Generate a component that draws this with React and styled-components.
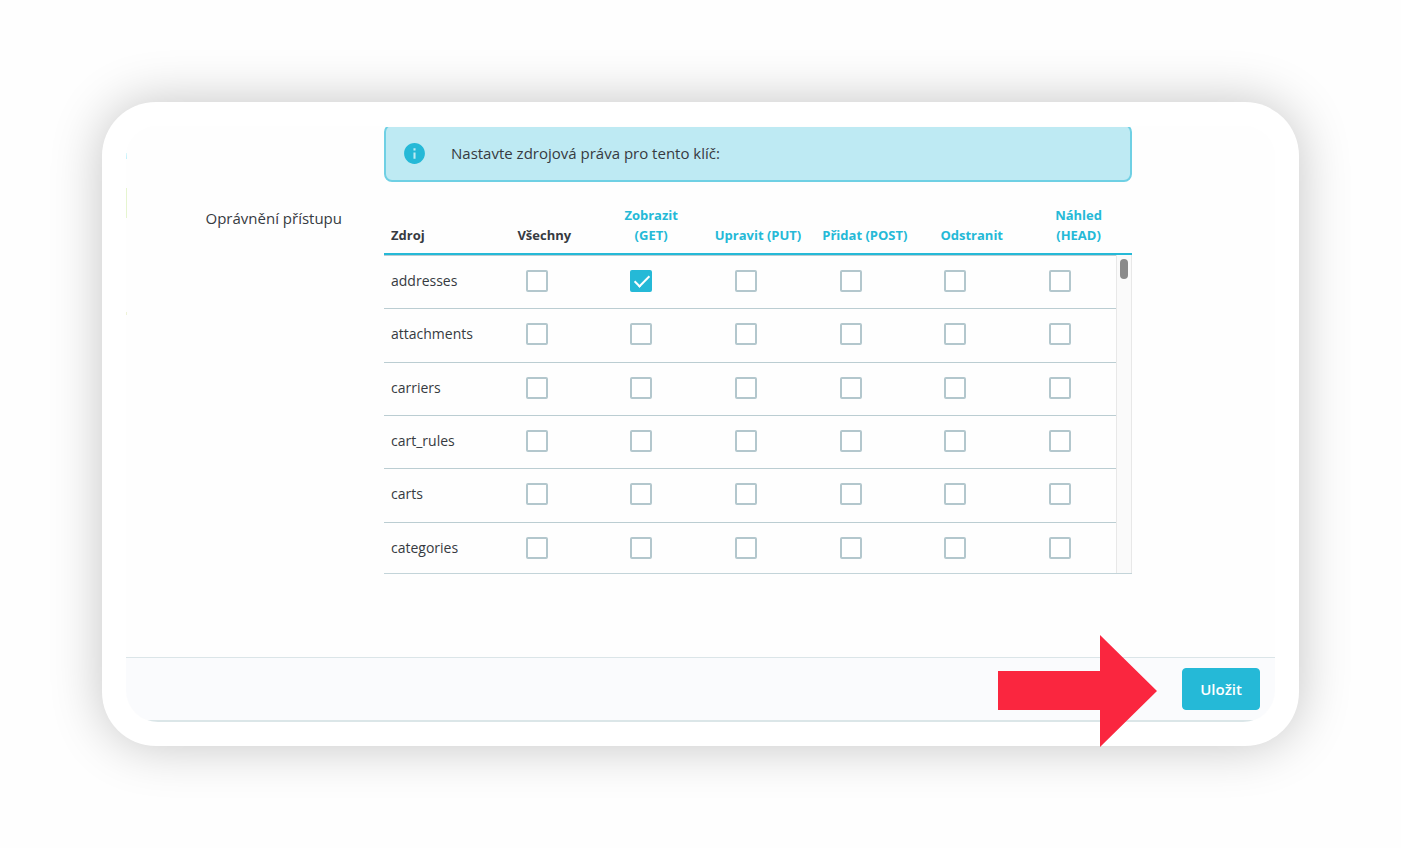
import React, { useState } from 'react'
import styled, { createGlobalStyle } from 'styled-components'
import { MdInfo } from 'react-icons/md'

const GlobalStyle = createGlobalStyle`
  * {
    box-sizing: border-box;
  }

  body {
    margin: 0;
    background: #fefefe;
    color: #363a41;
    font-family: 'Open Sans', 'Noto Sans', sans-serif;
  }
`

const Page = styled.main`
  display: flex;
  flex-direction: column;
  min-height: 100vh;
  padding: 102px;
`

const Card = styled.div`
  position: relative;
  display: flex;
  flex: 1;
  flex-direction: column;
  padding: 24px;
  border-radius: 54px;
  background: #fff;
  box-shadow: 0 0 52px rgba(0, 0, 0, 0.23);
`

const Screen = styled.form`
  display: flex;
  flex: 1;
  flex-direction: column;
  padding-top: 1px;
  border-radius: 32px;
  overflow: hidden;
  background:
    linear-gradient(#c4f2fb, #c4f2fb) 0 27px / 1px 6px no-repeat,
    linear-gradient(#e6f5d0, #e6f5d0) 0 62px / 1px 30px no-repeat,
    linear-gradient(#eef3d8, #eef3d8) 0 186px / 1px 3px no-repeat,
    #fefefe;
`

const FormRow = styled.div`
  display: grid;
  flex: 1;
  grid-template-columns: 216px minmax(0, 1fr);
  align-items: start;
  column-gap: 42px;
  padding-right: 143px;
  overflow: hidden;
`

const RowLabel = styled.div`
  padding-top: 80px;
  font-size: 15px;
  line-height: 22px;
  text-align: right;
`

const Alert = styled.div`
  display: flex;
  align-items: center;
  gap: 24px;
  height: 58px;
  margin: -3px 0 13px;
  padding: 0 16px;
  border: 2px solid #6fd0e4;
  border-radius: 8px;
  background: #beeaf3;
  font-size: 15px;

  svg {
    color: #25b9d7;
  }
`

const TableFrame = styled.div`
  position: relative;
  height: 379px;
  border-bottom: 1px solid #c3d4d9;
  overflow: hidden;
`

const Table = styled.table`
  display: block;
  font-size: 13px;
  line-height: 20px;
`

const Head = styled.thead`
  display: block;
  height: 60px;
  border-bottom: 2px solid #25b9d7;
`

const Body = styled.tbody`
  display: grid;
  grid-auto-rows: 1fr;
  height: 320px;
  margin-right: 16px;
`

const HeadRow = styled.tr`
  display: grid;
  grid-template-columns: repeat(7, 1fr);
  align-items: end;
  height: 100%;
  padding-bottom: 8px;
`

const BodyRow = styled.tr`
  display: grid;
  grid-template-columns: repeat(7, 1fr);
  align-items: center;
  border-top: 1px solid #bbcdd2;
`

const HeadCell = styled.th`
  padding: ${({ $left }) => ($left ? '0 7px' : '0 9px')};
  color: ${({ $accent }) => ($accent ? '#25b9d7' : '#363a41')};
  font-weight: 700;
  text-align: ${({ $left }) => ($left ? 'left' : 'center')};
`

const NameCell = styled.th`
  padding: 0 7px 2px;
  font-size: 14px;
  font-weight: 400;
  text-align: left;
`

const CheckCell = styled.td`
  display: flex;
  justify-content: center;
  padding: 0 8px 2px 0;
`

const Checkbox = styled.input`
  display: grid;
  width: 22px;
  height: 22px;
  margin: 0;
  border: 2px solid #b3c7cd;
  border-radius: 2px;
  background: #fff;
  appearance: none;
  cursor: pointer;

  &:checked {
    border-color: #25b9d7;
    background: #25b9d7;
  }

  &:checked::after {
    content: '';
    width: 6px;
    height: 13px;
    margin-left: 6px;
    border: solid #fff;
    border-width: 0 2px 2px 0;
    transform: rotate(45deg);
  }
`

const ScrollTrack = styled.div`
  position: absolute;
  top: 60px;
  right: 0;
  bottom: 0;
  width: 16px;
  padding: 4px 3px;
  border: solid #e8e8e8;
  border-width: 0 1px;
  background: #fafafa;
`

const ScrollThumb = styled.div`
  height: 20px;
  border-radius: 4px;
  background: #8a8a8a;
`

const Footer = styled.footer`
  display: flex;
  align-items: center;
  justify-content: flex-end;
  height: 65px;
  padding-right: 15px;
  border-top: 1px solid #dbe5e8;
  border-bottom: 2px solid #dbe6e8;
  background: #fafbfd;
`

const SaveButton = styled.button`
  height: 42px;
  padding: 0 17px;
  border: 1px solid #25b9d7;
  border-radius: 4px;
  background: #25b9d7;
  color: #fff;
  font-family: inherit;
  font-size: 15px;
  font-weight: 600;
  cursor: pointer;
`

const Arrow = styled.svg`
  position: absolute;
  right: 142px;
  bottom: -1px;
  width: 159px;
  height: 112px;
  fill: #fa263f;
  pointer-events: none;
`

const methods = [
  { id: 'all', label: 'Všechny' },
  { id: 'get', label: 'Zobrazit (GET)', accent: true },
  { id: 'put', label: 'Upravit (PUT)', accent: true },
  { id: 'post', label: 'Přidat (POST)', accent: true },
  { id: 'delete', label: 'Odstranit', accent: true },
  { id: 'head', label: 'Náhled (HEAD)', accent: true },
]

const resources = ['addresses', 'attachments', 'carriers', 'cart_rules', 'carts', 'categories']

const PermissionsTable = () => {
  const [checked, setChecked] = useState({ 'addresses-get': true })

  const toggle = (key) => setChecked({ ...checked, [key]: !checked[key] })

  return (
    <TableFrame>
      <Table aria-labelledby="permissions-label">
        <Head>
          <HeadRow>
            <HeadCell scope="col" $left>Zdroj</HeadCell>
            {methods.map((method) => (
              <HeadCell key={method.id} scope="col" $accent={method.accent}>{method.label}</HeadCell>
            ))}
          </HeadRow>
        </Head>
        <Body>
          {resources.map((resource) => (
            <BodyRow key={resource}>
              <NameCell scope="row">{resource}</NameCell>
              {methods.map((method) => {
                const key = `${resource}-${method.id}`
                return (
                  <CheckCell key={key}>
                    <Checkbox
                      type="checkbox"
                      aria-label={`${resource} ${method.label}`}
                      checked={!!checked[key]}
                      onChange={() => toggle(key)}
                    />
                  </CheckCell>
                )
              })}
            </BodyRow>
          ))}
        </Body>
      </Table>
      <ScrollTrack>
        <ScrollThumb />
      </ScrollTrack>
    </TableFrame>
  )
}

const App = () => (
  <>
    <GlobalStyle />
    <Page>
      <Card>
        <Screen onSubmit={(e) => e.preventDefault()}>
          <FormRow>
            <RowLabel id="permissions-label">Oprávnění přístupu</RowLabel>
            <div>
              <Alert>
                <MdInfo size={25} />
                Nastavte zdrojová práva pro tento klíč:
              </Alert>
              <PermissionsTable />
            </div>
          </FormRow>
          <Footer>
            <SaveButton type="submit">Uložit</SaveButton>
          </Footer>
        </Screen>
        <Arrow viewBox="0 0 159 112" aria-hidden="true">
          <path d="M0 36h102V0l57 56-57 56V75H0z" />
        </Arrow>
      </Card>
    </Page>
  </>
)

export default App
